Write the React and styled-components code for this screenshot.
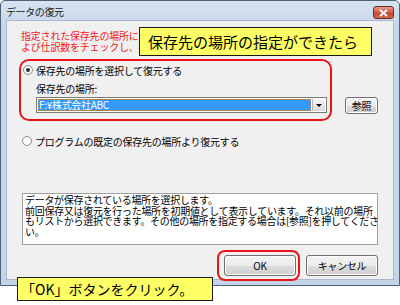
import React from "react";
import styled, { createGlobalStyle } from "styled-components";

const GlobalStyle = createGlobalStyle`
  html, body {
    margin: 0;
    padding: 0;
    background: #ffffff;
  }
  body {
    font-family: "Noto Sans CJK JP", "Liberation Sans", sans-serif;
  }
`;

const Page = styled.div`
  position: relative;
  width: 400px;
  height: 305px;
  overflow: hidden;
  background: #ffffff;
`;

const Window = styled.div`
  box-sizing: border-box;
  width: 400px;
  height: 286px;
  border: 1px solid #4e6177;
  border-radius: 5px 5px 0 0;
  background: linear-gradient(#d6e3f1, #c4d5e8 30px, #c4d5e8);
  display: flex;
  flex-direction: column;
`;

const TitleBar = styled.div`
  height: 19px;
  display: flex;
  align-items: center;
  justify-content: space-between;
  padding: 0 5px 0 5px;
`;

const Title = styled.span`
  font-size: 10px;
  letter-spacing: -0.4px;
  color: #1a1a1a;
  margin-top: 1px;
`;

const CloseButton = styled.div`
  box-sizing: border-box;
  width: 21px;
  height: 13px;
  margin-top: 4px;
  border: 1px solid #6e2b22;
  border-radius: 3px;
  background: linear-gradient(#e39a88, #cf5a45 50%, #c2402c 51%, #d46a50);
  display: flex;
  align-items: center;
  justify-content: center;
`;

const Client = styled.div`
  box-sizing: border-box;
  flex: 1;
  margin: 0 5px 5px 5px;
  background: #f0f0f0;
  border: 1px solid #a9b9cb;
  padding: 9px 15px 0 12px;
  display: flex;
  flex-direction: column;
  font-size: 10px;
  color: #000;
`;

const Notice = styled.div`
  margin-left: 2px;
  color: #ee2020;
  font-size: 10px;
  line-height: 11px;
  letter-spacing: -0.2px;
  white-space: nowrap;
`;

const SourceRow = styled.div`
  display: flex;
  align-items: flex-start;
  gap: 13px;
  margin-top: 7px;
`;

const Highlight = styled.div`
  box-sizing: border-box;
  width: 313px;
  border: 2px solid #e8141a;
  border-radius: 10px;
  padding: 2px 5px 6px 1px;
`;

const RadioRow = styled.label`
  display: flex;
  align-items: center;
  gap: 3px;
  height: 14px;
  margin-left: ${(p) => p.$indent || 0}px;
  margin-top: ${(p) => p.$top || 0}px;
  font-size: 10px;
  letter-spacing: -0.25px;
  white-space: nowrap;
`;

const RadioDot = styled.span`
  box-sizing: border-box;
  width: 10px;
  height: 10px;
  border-radius: 50%;
  border: 1px solid #8e8f8f;
  background: radial-gradient(circle, #ffffff 40%, #e6e6e6);
  display: flex;
  align-items: center;
  justify-content: center;

  &::after {
    content: "";
    width: 4px;
    height: 4px;
    border-radius: 50%;
    background: ${(p) => (p.$checked ? "#1f2a33" : "transparent")};
  }
`;

const FieldLabel = styled.div`
  margin: 6px 0 0 14px;
  height: 12px;
  line-height: 12px;
  font-size: 10px;
  letter-spacing: -0.25px;
`;

const Combo = styled.div`
  box-sizing: border-box;
  margin: 2px 0 0 14px;
  width: 291px;
  height: 16px;
  border: 1px solid #7a7a7a;
  background: #ffffff;
  display: flex;
  padding: 1px;
`;

const ComboValue = styled.div`
  flex: 1;
  background: #3399ff;
  color: #ffffff;
  font-size: 10px;
  line-height: 12px;
  padding-left: 1px;
  outline: 1px dotted #b08a52;
  outline-offset: -1px;
  letter-spacing: -0.3px;
`;

const ComboArrow = styled.div`
  width: 12px;
  margin-left: 1px;
  background: linear-gradient(#f4f4f4, #dcdcdc);
  border-left: 1px solid #b5b5b5;
  display: flex;
  align-items: center;
  justify-content: center;

  &::after {
    content: "";
    border-left: 3px solid transparent;
    border-right: 3px solid transparent;
    border-top: 3px solid #000;
  }
`;

const Button = styled.button`
  box-sizing: border-box;
  width: ${(p) => p.$w}px;
  height: ${(p) => p.$h || 21}px;
  margin-top: ${(p) => p.$top || 0}px;
  border: 1px solid #707070;
  border-radius: 3px;
  background: linear-gradient(#f3f3f3, #ebebeb 50%, #dddddd 51%, #cfcfcf);
  box-shadow: inset 0 0 0 1px #fcfcfc;
  font-family: inherit;
  font-size: 10px;
  color: #000;
  padding: 0;
  letter-spacing: -0.3px;
`;

const InfoBox = styled.div`
  box-sizing: border-box;
  margin: 45px 0 0 3px;
  width: 356px;
  height: 52px;
  border: 1px solid #a0a0a0;
  background: #ffffff;
  padding: 1px 2px;
  font-size: 10px;
  line-height: 10.6px;
  letter-spacing: -0.3px;
  white-space: nowrap;
`;

const ButtonRow = styled.div`
  display: flex;
  justify-content: flex-end;
  gap: 10px;
  margin-top: 10px;
`;

const Ring = styled.div`
  display: flex;
  margin: -5px -4px -5px -7px;
  padding: 3px 2px 3px 5px;
  border: 2px solid #e8141a;
  border-radius: 8px;
`;

const Callout = styled.div`
  position: absolute;
  box-sizing: border-box;
  left: ${(p) => p.$x}px;
  top: ${(p) => p.$y}px;
  width: ${(p) => p.$w}px;
  height: ${(p) => p.$h}px;
  background: #ffff66;
  border: 1px solid #1a1a1a;
  font-size: ${(p) => p.$size}px;
  padding-left: ${(p) => p.$pad}px;
  display: flex;
  align-items: center;
  color: #000;
  white-space: nowrap;
`;

export default function App() {
  return (
    <Page>
      <GlobalStyle />
      <Window>
        <TitleBar>
          <Title>データの復元</Title>
          <CloseButton>
            <svg width="9" height="8" viewBox="0 0 9 8">
              <path d="M1 1 L8 7 M8 1 L1 7" stroke="#ffffff" strokeWidth="2" />
            </svg>
          </CloseButton>
        </TitleBar>
        <Client>
          <Notice>
            指定された保存先の場所にあるデータファイルの会社名、会計年度、件数お
            <br />
            よび仕訳数をチェックし、条件に合うデータを復元します。
          </Notice>
          <SourceRow>
            <Highlight>
              <RadioRow $indent={1}>
                <RadioDot $checked />
                保存先の場所を選択して復元する
              </RadioRow>
              <FieldLabel>保存先の場所:</FieldLabel>
              <Combo>
                <ComboValue>F:¥株式会社ABC</ComboValue>
                <ComboArrow />
              </Combo>
            </Highlight>
            <Button $w={33} $h={17} $top={38}>
              参照
            </Button>
          </SourceRow>
          <RadioRow $indent={3} $top={13}>
            <RadioDot />
            プログラムの既定の保存先の場所より復元する
          </RadioRow>
          <InfoBox>
            データが保存されている場所を選択します。
            <br />
            前回保存又は復元を行った場所を初期値として表示しています。それ以前の場所
            <br />
            もリストから選択できます。その他の場所を指定する場合は[参照]を押してくださ
            <br />
            い。
          </InfoBox>
          <ButtonRow>
            <Ring>
              <Button $w={72}>OK</Button>
            </Ring>
            <Button $w={72}>キャンセル</Button>
          </ButtonRow>
        </Client>
      </Window>
      <Callout $x={139} $y={27} $w={233} $h={29} $size={15} $pad={8}>
        保存先の場所の指定ができたら
      </Callout>
      <Callout $x={17} $y={277} $w={196} $h={24} $size={14} $pad={3}>
        「OK」ボタンをクリック。
      </Callout>
    </Page>
  );
}
